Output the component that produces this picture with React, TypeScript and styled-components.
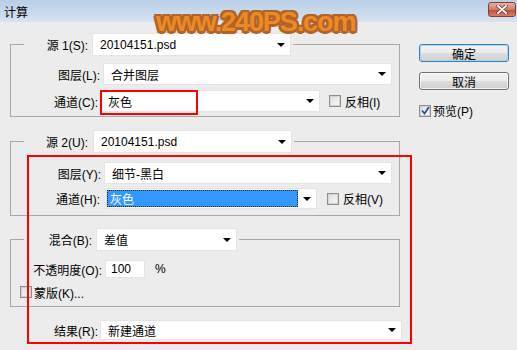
import styled, { createGlobalStyle } from "styled-components";

const GlobalStyle = createGlobalStyle`
  html, body {
    margin: 0;
    padding: 0;
  }
  body {
    background: #ececec;
    font-family: "Liberation Sans", "Noto Sans CJK SC", sans-serif;
    font-size: 12px;
    color: #000;
  }
`;

const Window = styled.div`
  position: relative;
  width: 517px;
  height: 350px;
  overflow: hidden;
  background: #ececec;
`;

const TitleBar = styled.div`
  height: 22px;
  box-sizing: border-box;
  display: flex;
  align-items: center;
  justify-content: space-between;
  padding: 0 1px 0 4px;
  background: linear-gradient(#b9cee7, #d6e3f1);
`;

const Title = styled.span`
  font-family: "Noto Sans CJK SC", sans-serif;
  font-size: 12px;
`;

const CloseButton = styled.div`
  width: 28px;
  height: 15px;
  box-sizing: border-box;
  margin-top: -3px;
  border: 1px solid #8c3a2e;
  border-radius: 3px;
  background: linear-gradient(#e6b0a2, #d27a66 50%, #c04a34 51%, #d8806a);
  display: flex;
  align-items: center;
  justify-content: center;
`;

const Watermark = styled.div`
  position: absolute;
  left: 156px;
  top: 9px;
  font-family: "Liberation Sans", sans-serif;
  font-weight: bold;
  font-size: 27px;
  line-height: 1;
  letter-spacing: -1.1px;
  color: #ee8a22;
  -webkit-text-stroke: 2px #fff;
  paint-order: stroke fill;
  text-shadow: 2.5px 0 0 #b0642a, -2.5px 0 0 #b0642a, 0 2.5px 0 #b0642a, 0 -2.5px 0 #b0642a,
    2px 2px 0 #b0642a, -2px -2px 0 #b0642a, 2px -2px 0 #b0642a, -2px 2px 0 #b0642a;
  pointer-events: none;
`;

const Body = styled.div`
  position: relative;
  display: flex;
  padding: 11px 0 0 10px;
`;

const LeftColumn = styled.div`
  width: 392px;
  display: flex;
  flex-direction: column;
`;

const RightColumn = styled.div`
  margin-left: 17px;
  padding-top: 11px;
  display: flex;
  flex-direction: column;
`;

const Group = styled.fieldset<{ $top?: number; $pad: string }>`
  width: 390px;
  min-width: 0;
  box-sizing: border-box;
  margin: ${(p) => p.$top ?? 0}px 0 0 0;
  padding: ${(p) => p.$pad};
  border: 1px solid #a8a8a8;
  display: flex;
  flex-direction: column;
`;

const Legend = styled.legend`
  display: flex;
  align-items: center;
  height: 23px;
  padding: 0 2px 0 0;
  margin-left: 13px;
`;

const Row = styled.div<{ $h: number; $mt?: number; $pl?: number }>`
  display: flex;
  align-items: center;
  height: ${(p) => p.$h}px;
  margin-top: ${(p) => p.$mt ?? 0}px;
  padding-left: ${(p) => p.$pl ?? 0}px;
`;

const Label = styled.span<{ $w?: number }>`
  width: ${(p) => (p.$w ? `${p.$w}px` : "auto")};
  flex-shrink: 0;
  text-align: right;
  white-space: nowrap;
`;

const Select = styled.div<{ $w: number; $h?: number; $ml?: number; $selected?: boolean }>`
  position: relative;
  box-sizing: border-box;
  width: ${(p) => p.$w}px;
  height: ${(p) => p.$h ?? 22}px;
  margin-left: ${(p) => p.$ml ?? 0}px;
  padding-left: ${(p) => (p.$selected ? 0 : 7)}px;
  flex-shrink: 0;
  display: flex;
  align-items: center;
  background: #fff;
  border: 1px solid #e4e4e4;
  white-space: nowrap;

  &::after {
    content: "";
    position: absolute;
    right: 5px;
    top: 50%;
    margin-top: -2px;
    border-left: 4px solid transparent;
    border-right: 4px solid transparent;
    border-top: 4px solid #000;
  }
`;

const Highlight = styled.span`
  align-self: stretch;
  flex: 1;
  margin: 1px 18px 1px 0;
  padding-left: 3px;
  display: flex;
  align-items: center;
  background: #3399ff;
  color: #fff;
  outline: 1px dotted #222;
  outline-offset: -1px;
`;

const Input = styled.div<{ $w: number; $ml?: number }>`
  box-sizing: border-box;
  width: ${(p) => p.$w}px;
  height: 18px;
  margin-left: ${(p) => p.$ml ?? 0}px;
  padding-left: 5px;
  display: flex;
  align-items: center;
  background: #fff;
  border: 1px solid #e4e4e4;
`;

const Unit = styled.span`
  margin-left: 10px;
`;

const Check = styled.span<{ $ml?: number }>`
  width: 12px;
  height: 12px;
  box-sizing: border-box;
  flex-shrink: 0;
  margin-left: ${(p) => p.$ml ?? 0}px;
  border: 1px solid #8e8e8e;
  box-shadow: inset 0 0 0 1px #d2d2d2;
  background: linear-gradient(135deg, #dedede, #f8f8f8);
  display: inline-flex;
  align-items: center;
  justify-content: center;
`;

const CheckText = styled.span<{ $ml?: number }>`
  margin-left: ${(p) => p.$ml ?? 3}px;
  white-space: nowrap;
`;

const Button = styled.div<{ $default?: boolean; $mt?: number }>`
  width: 90px;
  height: 18px;
  box-sizing: border-box;
  margin-top: ${(p) => p.$mt ?? 0}px;
  border: 1px solid ${(p) => (p.$default ? "#3c7fb1" : "#707070")};
  border-radius: 3px;
  background: linear-gradient(#f2f2f2, #ebebeb 50%, #dddddd 51%, #cfcfcf);
  box-shadow: inset 0 0 0 1px
    ${(p) => (p.$default ? "rgba(160, 215, 245, 0.9)" : "rgba(255, 255, 255, 0.7)")};
  display: flex;
  align-items: center;
  justify-content: center;
  font-family: "Noto Sans CJK SC", sans-serif;
`;

const CheckRow = styled.div<{ $mt?: number }>`
  display: flex;
  align-items: center;
  margin-top: ${(p) => p.$mt ?? 0}px;
`;

const Annotation = styled.div<{ $x: number; $y: number; $w: number; $h: number }>`
  position: absolute;
  left: ${(p) => p.$x}px;
  top: ${(p) => p.$y}px;
  width: ${(p) => p.$w}px;
  height: ${(p) => p.$h}px;
  box-sizing: border-box;
  border: 2px solid #f00;
  pointer-events: none;
`;

const CloseIcon = () => (
  <svg width="12" height="9" viewBox="0 0 12 9">
    <path d="M2 1 L10 8 M10 1 L2 8" stroke="#6a2a20" strokeWidth="3.4" strokeLinecap="round" />
    <path d="M2 1 L10 8 M10 1 L2 8" stroke="#fff" strokeWidth="2" strokeLinecap="round" />
  </svg>
);

const Tick = () => (
  <svg width="9" height="9" viewBox="0 0 9 9">
    <path d="M1 4.5 L3.5 7.5 L8 1" fill="none" stroke="#2b4fa8" strokeWidth="1.8" />
  </svg>
);

export default function App() {
  return (
    <Window>
      <GlobalStyle />
      <TitleBar>
        <Title>计算</Title>
        <CloseButton>
          <CloseIcon />
        </CloseButton>
      </TitleBar>

      <Body>
        <LeftColumn>
          <Group $pad="7px 0 4px 0">
            <Legend>
              <Label $w={64}>源 1(S):</Label>
              <Select $w={199} $h={23} $ml={4}>20104151.psd</Select>
            </Legend>
            <Row $h={22}>
              <Label $w={89}>图层(L):</Label>
              <Select $w={289} $ml={3}>合并图层</Select>
            </Row>
            <Row $h={22} $mt={5}>
              <Label $w={87}>通道(C):</Label>
              <Select $w={220} $ml={2}>灰色</Select>
              <Check $ml={9} />
              <CheckText $ml={4}>反相(I)</CheckText>
            </Row>
          </Group>

          <Group $top={13} $pad="9px 0 6px 0">
            <Legend>
              <Label $w={64}>源 2(U):</Label>
              <Select $w={199} $h={23} $ml={5}>20104151.psd</Select>
            </Legend>
            <Row $h={22}>
              <Label $w={90}>图层(Y):</Label>
              <Select $w={288} $ml={3}>细节-黑白</Select>
            </Row>
            <Row $h={21} $mt={4}>
              <Label $w={89}>通道(H):</Label>
              <Select $w={211} $h={21} $ml={6} $selected>
                <Highlight>灰色</Highlight>
              </Select>
              <Check $ml={10} />
              <CheckText $ml={4}>反相(V)</CheckText>
            </Row>
          </Group>

          <Group $top={12} $pad="9px 0 7px 0">
            <Legend>
              <Label $w={68}>混合(B):</Label>
              <Select $w={141} $h={23} $ml={4}>差值</Select>
            </Legend>
            <Row $h={18}>
              <Label $w={91}>不透明度(O):</Label>
              <Input $w={40} $ml={3}>100</Input>
              <Unit>%</Unit>
            </Row>
            <Row $h={14} $mt={7} $pl={9}>
              <Check />
              <CheckText $ml={2}>蒙版(K)...</CheckText>
            </Row>
          </Group>

          <Row $h={20} $mt={13}>
            <Label $w={88}>结果(R):</Label>
            <Select $w={302} $h={20} $ml={2}>新建通道</Select>
          </Row>
        </LeftColumn>

        <RightColumn>
          <Button $default>确定</Button>
          <Button $mt={10}>取消</Button>
          <CheckRow $mt={12}>
            <Check>
              <Tick />
            </Check>
            <CheckText $ml={2}>预览(P)</CheckText>
          </CheckRow>
        </RightColumn>

        <Annotation $x={100} $y={68} $w={98} $h={25} />
        <Annotation $x={27} $y={133} $w={385} $h={189} />
      </Body>

      <Watermark>www.240PS.com</Watermark>
    </Window>
  );
}
